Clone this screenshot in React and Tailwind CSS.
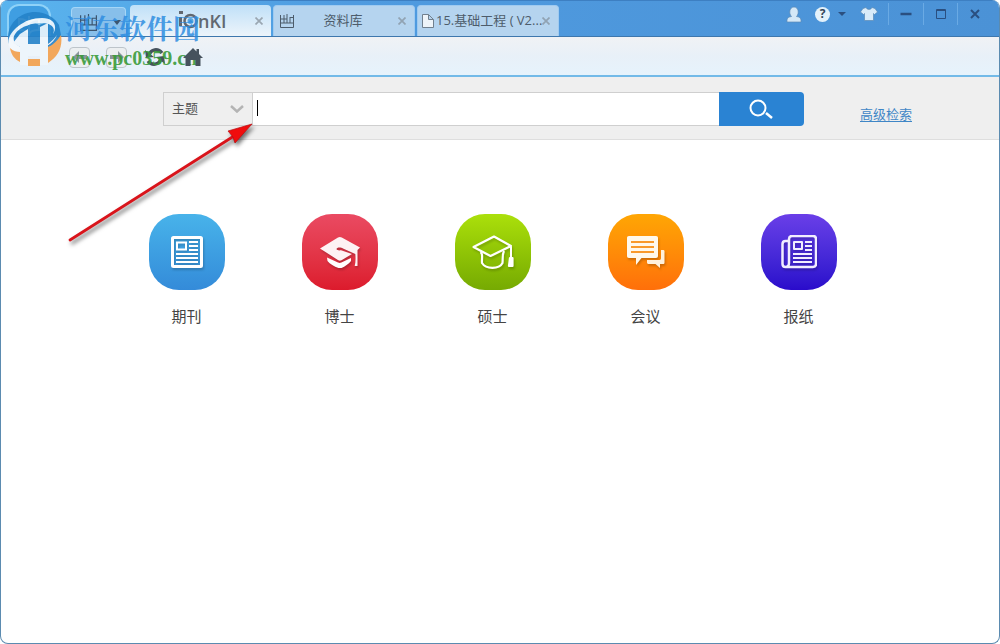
import { useState } from 'react'

const CATEGORIES = [
  { name: '期刊', color: 'from-[#48b3ea] to-[#348bd9]', Icon: JournalIcon },
  { name: '博士', color: 'from-[#ea4a62] to-[#dc1a2c]', Icon: DoctorIcon },
  { name: '硕士', color: 'from-[#abe00b] to-[#76aa02]', Icon: MasterIcon },
  { name: '会议', color: 'from-[#ffa604] to-[#ff6f0a]', Icon: MeetingIcon },
  { name: '报纸', color: 'from-[#6a3ee8] to-[#2a0acb]', Icon: NewspaperIcon },
]

function JournalIcon() {
  return (
    <svg viewBox="0 0 32 32" className="size-8" fill="none" stroke="#fff">
      <rect x="1.500" y="1.500" width="29" height="29" rx="1" strokeWidth="3" />
      <rect x="6" y="6.500" width="9" height="7" strokeWidth="2" />
      <path d="M18 6h9M18 10h9M18 14h9M5 18h22M5 22h22M5 26h22" strokeWidth="2" />
    </svg>
  )
}

function DoctorIcon() {
  return (
    <svg viewBox="0 0 42 32" className="w-[42px] h-8">
      <path d="M1 12.500 19 1.500c1.300-.7 2.500-.7 3.800 0L41 11.500l-2.500 2.500v16h-2.800c1-4 1-8 .6-12L24 12.500c-2-1.500-6.500-1.500-6.500.6.400 1.500 3 1.500 4.500 1.200l11 3.700-10.500 6.200c-1 .6-2.200.6-3.200 0z" fill="#fdf2f4" />
      <path d="M8 21.500l11 5c1.200.6 2.200.6 3.400 0l9.600-4.500v3c-2.500 3-6 5.500-9.500 7-1 .4-2 .4-3 0C15 30.500 11 28 8.500 25z" fill="#fff" />
    </svg>
  )
}

function MasterIcon() {
  return (
    <svg viewBox="0 0 42 34" className="w-[42px] h-[34px]" fill="none" stroke="#fff" strokeWidth="2.200" strokeLinejoin="round">
      <path d="M1.500 12 22 1.500 39 11 18.500 21z" />
      <path d="M8.500 17c3 2 1 7 1.500 11 4 6.500 17 6.500 20.500 0 .5-4-.5-8 1.500-12" />
      <path d="M39 11.500V22" strokeWidth="2" />
      <path d="M38 23h2.500v8H37z" fill="#fff" />
    </svg>
  )
}

function MeetingIcon() {
  return (
    <svg viewBox="0 0 38 34" className="w-[38px] h-[34px]">
      <path d="M34 15h2c1 0 1.500.5 1.500 1.500v11c0 1-.5 1.500-1.500 1.500h-3v4l-4.500-4H22c-1 0-2-.5-2-1.500V25h12c1.500 0 2-.5 2-2z" fill="#fff0dc" />
      <path d="M2 1h27c1.300 0 2 .7 2 2v18c0 1.300-.7 2-2 2H14.500L9 30v-7H2c-1.300 0-2-.7-2-2V3c0-1.300.7-2 2-2z" fill="#fff8ec" />
      <path d="M4 7h23M4 12h23M4 17h23" stroke="#f9992b" strokeWidth="2" />
    </svg>
  )
}

function NewspaperIcon() {
  return (
    <svg viewBox="0 0 36 34" className="w-9 h-[34px]" fill="none" stroke="#f1edff" strokeWidth="2.500" strokeLinejoin="round">
      <path d="M8 6H4.500C2.500 6 1.500 7 1.500 9v20c0 2 1 3 3 3H32c2 0 3-1 3-3V4c0-2-1-3-3-3H11C9 1 8 2 8 4v24c0 2-1 4-3.500 4" />
      <rect x="13" y="7" width="8" height="7" strokeWidth="2" />
      <path d="M24 7h7M24 11h7M24 15h7M12 19h19M12 23h19M12 27h19" strokeWidth="2" />
    </svg>
  )
}

function ShelfIcon({ className }) {
  return (
    <svg viewBox="0 0 14 14" className={className} fill="none" stroke="currentColor">
      <path d="M.5 1v12.500h13V1M4 1v8M7 0v9M10 3v6M.5 9h13M.5 5H7M10 3.500h3.500" />
    </svg>
  )
}

function CloseIcon() {
  return (
    <svg viewBox="0 0 8 8" className="size-2" stroke="currentColor" strokeWidth="1.700">
      <path d="M.5.5l7 7M7.500.5l-7 7" />
    </svg>
  )
}

function TitleTabs() {
  return (
    <nav className="flex items-end gap-0.5 pl-1 text-[13px] text-[#4d5c6b]">
      <div className="flex h-[31px] w-[141px] items-center rounded-t-sm bg-linear-to-b from-[#bfe0f8] to-[#edf4fa] pl-12 pr-2">
        <a href="#cnki" className="flex items-center text-[#626870]">
          <svg viewBox="0 0 20 22" className="h-[22px] w-5" fill="none">
            <path d="M2.500 7v9M1 2.500h4" stroke="#626870" strokeWidth="3" />
            <circle cx="12.500" cy="11" r="6" stroke="#626870" strokeWidth="2.500" />
            <circle cx="12.500" cy="11" r="3" fill="#5aa7de" />
          </svg>
          <span className="font-['Open_Sans',sans-serif] text-lg font-semibold leading-6">nKI</span>
        </a>
        <button aria-label="关闭" className="ml-auto text-[#9aa6b1]"><CloseIcon /></button>
      </div>
      <div className="flex h-[31px] w-[142px] items-center rounded-t-sm border border-b-0 border-[#9fcaf0] bg-[#b5d4ef] px-2 pl-1.5">
        <ShelfIcon className="size-[14px]" />
        <a href="#library" className="flex-1 pr-1.5 text-center">资料库</a>
        <button aria-label="关闭" className="text-[#91a3b3]"><CloseIcon /></button>
      </div>
      <div className="flex h-[31px] w-[142px] items-center rounded-t-sm border border-b-0 border-[#9fcaf0] bg-[#b5d4ef] pl-1 pr-2">
        <svg viewBox="0 0 12 14" className="w-3 h-[14px] shrink-0" fill="#eef4f9" stroke="#71808e">
          <path d="M.5.5h6l5 5v8H.5zM6.500.5v5h5" />
        </svg>
        <a href="#doc" className="flex-1 whitespace-nowrap pl-0.5">15.基础工程 ( V2...</a>
        <button aria-label="关闭" className="text-[#91a3b3]"><CloseIcon /></button>
      </div>
    </nav>
  )
}

function WindowControls() {
  return (
    <div className="ml-auto flex h-[22px] items-center self-start pr-[7px] pt-1 text-[#2a4f80]">
      <button aria-label="用户" className="mr-1 w-[26px]">
        <svg viewBox="0 0 16 17" className="mx-auto h-[17px] w-4" fill="#d4e8f7" stroke="#5c89b5" strokeWidth=".7">
          <path d="M1 16c-.3-3.500 1-5 4.500-5.500C2.500 7.500 3.500 1 8 1s5.500 6.500 2.500 9.500c3.500.5 4.800 2 4.500 5.500z" />
        </svg>
      </button>
      <button aria-label="帮助" className="flex w-[39px] items-center gap-2 pl-1">
        <span className="flex size-[15px] shrink-0 items-center justify-center rounded-full bg-[#e3f1fb] text-xs font-bold leading-none text-[#35465a]">?</span>
        <svg viewBox="0 0 8 4" className="h-1 w-2" fill="currentColor"><path d="M0 0h8L4 4z" /></svg>
      </button>
      <button aria-label="皮肤" className="flex w-[38px] justify-center">
        <svg viewBox="0 0 18 14" className="h-[14px] w-[18px]" fill="#d9ebf9" stroke="#5c89b5" strokeWidth=".7">
          <path d="M6 .5C7 3 11 3 12 .5l3 1L17.500 5l-3 2.500-1-1v7h-9v-7l-1 1L.5 5 3 1.500z" />
        </svg>
      </button>
      <button aria-label="最小化" className="flex h-[22px] w-[35px] items-center justify-center border-l border-[#6aaae4]">
        <svg viewBox="0 0 12 12" className="size-3"><path d="M.5 6h11" stroke="currentColor" strokeWidth="2.500" /></svg>
      </button>
      <button aria-label="最大化" className="flex h-[22px] w-[34px] items-center justify-center border-l border-[#6aaae4]">
        <svg viewBox="0 0 12 12" className="size-3" fill="none" stroke="currentColor"><path d="M1.500 1.500h9v9h-9zM1 2.500h10" /></svg>
      </button>
      <button aria-label="关闭窗口" className="flex h-[22px] w-[35px] items-center justify-center border-l border-[#6aaae4]">
        <svg viewBox="0 0 10 10" className="size-[10px]" stroke="currentColor" strokeWidth="2"><path d="M1 1l8 8M9 1l-8 8" /></svg>
      </button>
    </div>
  )
}

function TitleBar() {
  return (
    <header className="flex h-[37px] items-end border-b border-[#3e77ad] border-t border-t-[#3d7fc2] bg-linear-to-r from-[#5ab4ee] via-[#4f9be0] via-35% to-[#4b92d6]">
      <a href="#home" aria-label="主页" className="ml-1.5 mr-5 h-8 w-11 self-end overflow-hidden rounded-t-xl border-2 border-b-0 border-[#8fd2f8] bg-[#3f9ee2]">
        <svg viewBox="0 0 40 30" className="w-10 h-[30px]" fill="none" stroke="#d6effc" strokeWidth="2">
          <path d="M20 10v20M10 13c5 0 10 2 10 5 0-3 5-5 10-5v11c-5 0-10 1-10 5 0-4-5-5-10-5z" />
        </svg>
      </a>
      <button aria-label="资料库菜单" className="flex h-[29px] w-[55px] items-center gap-4 rounded-t-sm border border-b-0 border-[#a5d6f7] bg-[#87bfea] pl-2 text-[#3d5670]">
        <ShelfIcon className="size-[17px]" />
        <svg viewBox="0 0 8 5" className="h-[5px] w-2" fill="currentColor"><path d="M0 0h8L4 5z" /></svg>
      </button>
      <TitleTabs />
      <WindowControls />
    </header>
  )
}

function Toolbar() {
  return (
    <div className="flex h-10 items-center gap-4 border-b-2 border-[#72bae8] bg-linear-to-b from-[#f0f2f5] via-[#e8f0f8] to-[#e6f3fc] pl-[68px] pt-0.5 text-[#46525d]">
      <button aria-label="后退" className="flex size-[21px] items-center justify-center rounded-sm border border-[#bdc4ca] bg-[#eceff1] text-[#8b959c]">
        <svg viewBox="0 0 14 12" className="h-3 w-[14px]" fill="currentColor"><path d="M0 6l6-6v4h8v4H6v4z" /></svg>
      </button>
      <button aria-label="前进" className="flex size-[21px] items-center justify-center rounded-sm border border-[#bdc4ca] bg-[#eceff1] text-[#8b959c]">
        <svg viewBox="0 0 14 12" className="h-3 w-[14px]" fill="currentColor"><path d="M14 6L8 0v4H0v4h8v4z" /></svg>
      </button>
      <button aria-label="刷新" className="px-0.5">
        <svg viewBox="0 0 20 20" className="size-5" fill="none" stroke="currentColor" strokeWidth="3.500">
          <path d="M4 8c2-6 9-7 13-2M16 12c-2 6-9 7-13 2" />
          <path d="M0 3l1 8 8-1zM20 17l-1-8-8 1z" fill="currentColor" stroke="none" />
        </svg>
      </button>
      <button aria-label="首页" className="relative z-10">
        <svg viewBox="0 0 20 20" className="size-5" fill="currentColor">
          <path d="M10 1l3.500 3.500V2H16v5l4 4h-2.500v8h-5v-6h-5v6h-5v-8H0z" />
        </svg>
      </button>
    </div>
  )
}

function SearchBar() {
  const [query, setQuery] = useState('')

  return (
    <section className="flex h-[63px] items-center border-b border-[#dedede] bg-[#efefef] pl-[162px] pr-[87px] pt-0.5">
      <form className="flex h-[34px] flex-1" onSubmit={(e) => e.preventDefault()}>
        <div className="relative w-[90px] border border-[#cfcfcf]">
          <select aria-label="检索字段" className="h-full w-full appearance-none bg-transparent pl-2 text-[13px] text-[#555] outline-none">
            <option>主题</option>
            <option>篇名</option>
            <option>作者</option>
          </select>
          <svg viewBox="0 0 14 8" className="pointer-events-none absolute right-2 top-3 h-2 w-[14px]" fill="none" stroke="#b4b4b4" strokeWidth="2.500">
            <path d="M1 1l6 5.500L13 1" />
          </svg>
        </div>
        <div className="relative flex-1 border-y border-[#cfcfcf] bg-white">
          <input
            aria-label="检索词"
            value={query}
            onChange={(e) => setQuery(e.target.value)}
            className="peer h-full w-full px-1 text-sm outline-none"
          />
          {!query && <span className="pointer-events-none absolute left-1 top-[7px] h-4 w-px bg-black peer-focus:hidden" />}
        </div>
        <button aria-label="检索" className="flex w-[85px] items-center justify-center rounded-r-sm bg-[#2a83d3]">
          <svg viewBox="0 0 24 20" className="h-5 w-6" fill="none" stroke="#fff" strokeWidth="2">
            <circle cx="9" cy="9" r="7.500" />
            <path d="M17 14l6 5" strokeWidth="2.500" />
          </svg>
        </button>
      </form>
      <a href="#advanced" className="ml-14 mt-3 text-[13px] text-[#3f86c6] underline underline-offset-2">高级检索</a>
    </section>
  )
}

function Watermark() {
  return (
    <div className="pointer-events-none absolute left-1.5 top-2.5 flex items-start gap-0.5">
      <svg viewBox="0 0 56 58" className="w-14 h-[58px] opacity-90">
        <path d="M1 26C2 12 14 2 28 2c11 0 20 6 24 13l2 10C50 40 20 46 4 38 1 34 1 30 1 26z" fill="#2583c9" />
        <path d="M16 14c5-6 17-6 22-1l-6 2c-4-3-9-2-12 1z" fill="#8cc6ea" />
        <path d="M8 33c-6-9 9-20 26-20 10 0 15 4 12 11 5-8 1-16-11-16C14 8-4 26 3 38c7 8 36 4 47-13-6 15-30 20-42 8z" fill="#f4f9fd" />
        <path d="M3 38c3 3 7 4 10 4v10C7 49 4 44 3 38zM21 42c4 0 8-1 12-2v4H21zM21 49h12v7H21zM41 37c5-2 9-6 13-12 2 12-3 22-13 28z" fill="#f3a04c" />
        <path d="M13 24l8-5v15h12V17l8-4v42h-8v-9H21v9h-8V37l-7-4z" fill="#eef6fc" />
      </svg>
      <div className="flex flex-col">
        <span className="font-['Noto_Serif_CJK_SC','Noto_Sans_CJK_SC',serif] text-[27px] font-bold leading-9 text-[#2f8de0]/85">河东软件园</span>
        <span className="font-['Liberation_Serif',serif] text-xl font-bold leading-6 text-[#379a37]/90">www.pc0359.cn</span>
      </div>
    </div>
  )
}

function PointerArrow() {
  return (
    <svg viewBox="0 0 190 125" className="pointer-events-none absolute left-[65px] top-[122px] h-[125px] w-[190px] drop-shadow-[2px_3px_2px_rgba(0,0,0,0.55)]">
      <path d="M4 118L168 14" stroke="#d9141b" strokeWidth="2.800" strokeLinecap="round" />
      <path d="M186 2L162 9l5 6 2 6z" fill="#f00d0d" stroke="#b80d12" strokeWidth=".7" />
    </svg>
  )
}

export default function App() {
  return (
    <div className="relative flex min-h-screen flex-col overflow-hidden rounded-lg border border-[#5b8bb0] border-t-0 bg-white font-['Open_Sans','Noto_Sans_CJK_SC',sans-serif]">
      <TitleBar />
      <Toolbar />
      <SearchBar />
      <main className="flex flex-1 justify-center gap-[77px] pr-[15px] pt-[74px]">
        {CATEGORIES.map(({ name, color, Icon }) => (
          <a key={name} href={`#${name}`} className="flex flex-col items-center gap-3.5 self-start text-[15px] leading-6 text-[#444]">
            <span className={`flex size-[76px] items-center justify-center rounded-[30px] bg-linear-to-b ${color}`}>
              <span className="drop-shadow-[1px_2px_1px_rgba(0,0,0,0.2)]"><Icon /></span>
            </span>
            {name}
          </a>
        ))}
      </main>
      <Watermark />
      <PointerArrow />
    </div>
  )
}
